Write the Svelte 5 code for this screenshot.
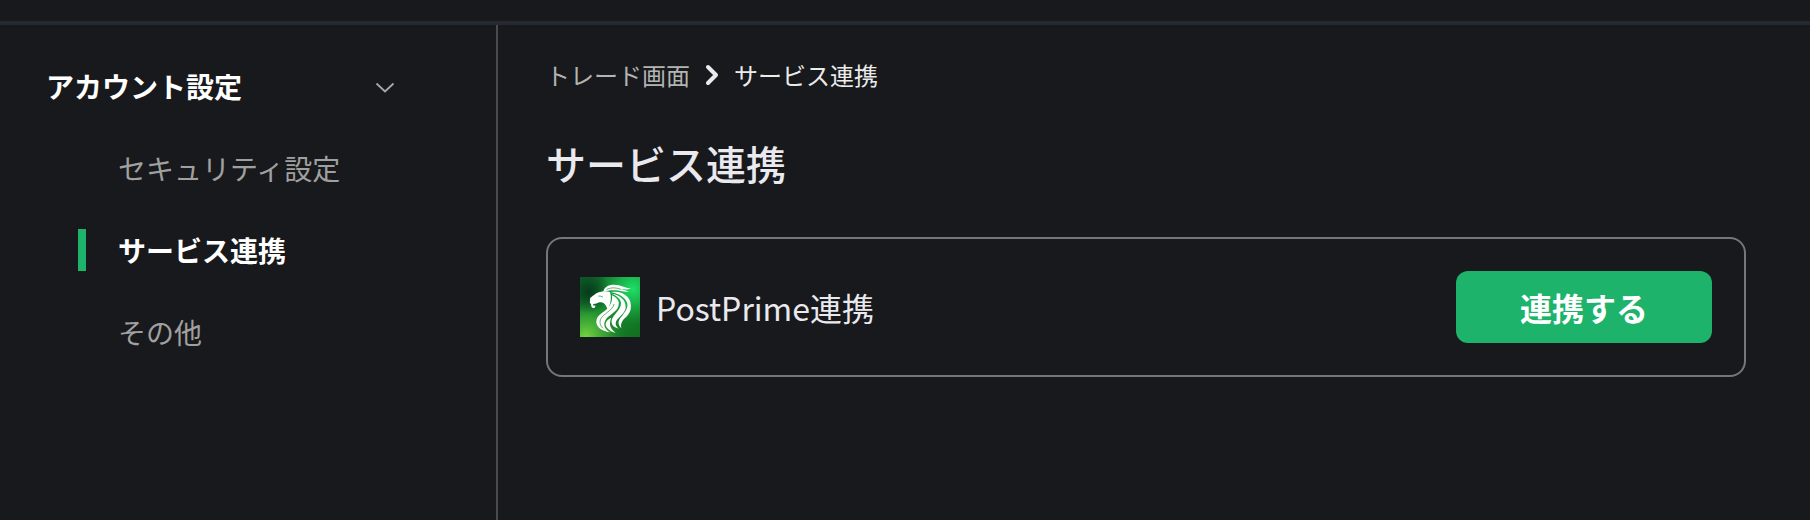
<script>
  const items = [
    { label: 'セキュリティ設定', active: false },
    { label: 'サービス連携', active: true },
    { label: 'その他', active: false }
  ];
</script>

<div class="page">
  <header class="topbar"></header>
  <div class="body">
    <aside class="sidebar">
      <button class="group" type="button" aria-expanded="true">
        <span>アカウント設定</span>
        <svg width="20" height="16" viewBox="0 0 20 16" fill="none" aria-hidden="true">
          <path d="M1.5 5.5 10 13.5l8.5-8" stroke="#a8a8a8" stroke-width="1.8" />
        </svg>
      </button>
      <nav class="menu">
        {#each items as item}
          <a href="#top" class="item" class:active={item.active}>{item.label}</a>
        {/each}
      </nav>
    </aside>

    <main class="content">
      <nav class="crumbs">
        <a href="#top">トレード画面</a>
        <svg width="16" height="24" viewBox="0 0 16 24" fill="none" aria-hidden="true">
          <path d="M4 4l8 8-8 8" stroke="#ebebeb" stroke-width="4" stroke-linecap="round" stroke-linejoin="round" />
        </svg>
        <span>サービス連携</span>
      </nav>
      <h1>サービス連携</h1>
      <section class="card">
        <svg class="logo" width="60" height="60" viewBox="0 0 180 180" aria-hidden="true">
          <defs>
            <linearGradient id="base" x1="0" y1="0" x2="1" y2="1">
              <stop offset="0" stop-color="#10602b" />
              <stop offset="0.5" stop-color="#168a30" />
              <stop offset="1" stop-color="#126e20" />
            </linearGradient>
            <radialGradient id="bright" cx="0.88" cy="0.2" r="0.6">
              <stop offset="0" stop-color="#1ee066" />
              <stop offset="0.45" stop-color="#1bbd50" stop-opacity="0.75" />
              <stop offset="1" stop-color="#189a38" stop-opacity="0" />
            </radialGradient>
            <radialGradient id="lime" cx="0.1" cy="1" r="0.65">
              <stop offset="0" stop-color="#77d543" />
              <stop offset="0.5" stop-color="#3faa35" stop-opacity="0.8" />
              <stop offset="1" stop-color="#1c8a2c" stop-opacity="0" />
            </radialGradient>
            <radialGradient id="shade" cx="0.15" cy="0.25" r="0.36">
              <stop offset="0" stop-color="#06391a" />
              <stop offset="1" stop-color="#06391a" stop-opacity="0" />
            </radialGradient>
          </defs>
          <rect width="180" height="180" fill="url(#base)" />
          <rect width="180" height="180" fill="url(#lime)" />
          <rect width="180" height="180" fill="url(#bright)" />
          <rect width="180" height="180" fill="url(#shade)" />
          <g fill="#fff">
            <path d="M70 44C72 31 83 23 103 23c17 0 32 9 50 12-9 3-19 3-28 1 9 4 16 6 23 7-13 3-28-2-41-3-14-1-24 1-37 4z" />
            <path d="M32 62C40 56 46 50 56 46c12-5 27-4 34-1 4 12 3 25 0 35l-6 17c-4-4-4-9-8-14-4-6-10-9-17-7-5 1-8 4-13 4-4 0-6 1-7 3 1 3 4 4 6 2 2 2 1 6-2 8-4 1-8-1-9-5l-1-7c-3-2-4-5-3-10 0-4 0-7 2-10z" />
            <path d="M92 45c41-5 66 19 60 52-4 19-20 26-25 36-4 8-5 12-3 20-11-9-11-22 0-34 10-13 20-25 18-39-4-18-24-30-50-35z" />
            <path d="M94 50c26 3 45 20 43 42-2 17-20 27-27 38-6 10-2 20 7 25-18-3-27-16-20-31 8-15 25-28 26-44 1-12-12-24-29-30z" />
            <path d="M96 55c20 10 24 22 18 36-7 16-28 24-37 37-9 14-3 31 15 38-26-3-43-16-43-32 0-20 23-27 34-40 9-11 15-22 13-39z" />
            <path d="M94 122c-9 21-3 32 13 46-23-7-35-22-28-34 3-6 9-9 15-12z" />
          </g>
          <g fill="none" stroke="#188832" stroke-width="2" stroke-linecap="round">
            <path d="M56 57q7-1 12 3" />
            <path d="M102 82c-3 18-34 29-41 46-3 11 1 20 7 25" />
            <path d="M81 37c14-7 28-5 42 0" />
          </g>
        </svg>
        <span class="name">PostPrime連携</span>
        <button class="link" type="button">連携する</button>
      </section>
    </main>
  </div>
</div>

<style>
  :global(body) {
    background: #18191c;
  }
  .page {
    display: flex;
    flex-direction: column;
    min-height: 100vh;
    background: #18191c;
    color: #e9e9ee;
    font-family: 'Noto Sans CJK JP', sans-serif;
  }
  .topbar {
    height: 21px;
    border-bottom: 4px solid #252a30;
  }
  .body {
    display: flex;
    flex: 1;
  }
  .sidebar {
    box-sizing: border-box;
    flex: 0 0 498px;
    padding-top: 40px;
    border-right: 2px solid #474d4a;
    font-size: 28px;
    line-height: 42px;
  }
  .group {
    display: flex;
    align-items: center;
    justify-content: space-between;
    width: 100%;
    padding: 0 101px 0 46px;
    border: 0;
    background: none;
    color: #fff;
    font: inherit;
    font-weight: 700;
    cursor: pointer;
  }
  .menu {
    display: flex;
    flex-direction: column;
    gap: 40px;
    padding: 40px 0 0 78px;
  }
  .item {
    padding-left: 32px;
    border-left: 8px solid transparent;
    color: #a0a0a0;
    text-decoration: none;
  }
  .item.active {
    border-color: #1db36b;
    color: #fff;
    font-weight: 700;
  }
  .content {
    flex: 1;
    min-width: 0;
    padding: 32px 64px 48px 48px;
  }
  .crumbs {
    display: flex;
    align-items: center;
    gap: 14px;
    font-size: 24px;
    line-height: 36px;
    color: #ebebeb;
  }
  .crumbs a {
    color: #b4b4b4;
    text-decoration: none;
  }
  h1 {
    margin: 40px 0 44px;
    font-size: 40px;
    line-height: 60px;
    font-weight: 500;
  }
  .card {
    display: flex;
    align-items: center;
    padding: 32px;
    border: 2px solid #767676;
    border-radius: 16px;
  }
  .logo {
    flex: none;
  }
  .name {
    margin-left: 16px;
    font-size: 32px;
    line-height: 48px;
  }
  .link {
    width: 256px;
    height: 72px;
    margin-left: auto;
    padding: 0;
    border: 0;
    border-radius: 12px;
    background: #1db36b;
    color: #fff;
    font: inherit;
    font-size: 32px;
    font-weight: 700;
    cursor: pointer;
  }
</style>
